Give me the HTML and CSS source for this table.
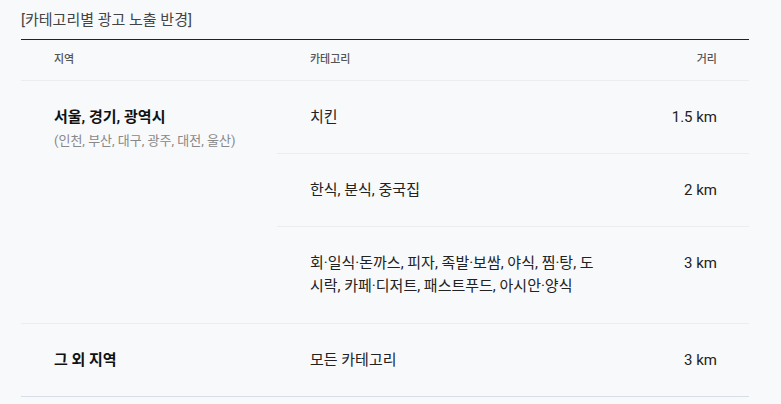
FILE: index.html
```html
<!DOCTYPE html>
<html lang="ko">
<head>
<meta charset="utf-8">
<link rel="stylesheet" href="styles.css">
</head>
<body>
<div class="wrap">
  <h2 class="title">[카테고리별 광고 노출 반경]</h2>
  <table class="radius">
    <colgroup>
      <col class="c-region">
      <col class="c-cat">
      <col class="c-dist">
    </colgroup>
    <thead>
      <tr>
        <th>지역</th>
        <th>카테고리</th>
        <th class="r">거리</th>
      </tr>
    </thead>
    <tbody>
      <tr>
        <td rowspan="3" class="region">
          <strong>서울, 경기, 광역시</strong>
          <span class="sub">(인천, 부산, 대구, 광주, 대전, 울산)</span>
        </td>
        <td>치킨</td>
        <td class="r">1.5 km</td>
      </tr>
      <tr>
        <td>한식, 분식, 중국집</td>
        <td class="r">2 km</td>
      </tr>
      <tr class="group-end">
        <td class="wrapcat">회·일식·돈까스, 피자, 족발·보쌈, 야식, 찜·탕, 도시락, 카페·디저트, 패스트푸드, 아시안·양식</td>
        <td class="r">3 km</td>
      </tr>
      <tr class="last">
        <td class="region"><strong>그 외 지역</strong></td>
        <td>모든 카테고리</td>
        <td class="r">3 km</td>
      </tr>
    </tbody>
  </table>
</div>
</body>
</html>
```

FILE: styles.css
```css
html, body {
  margin: 0;
  padding: 0;
  background: #f8f9fb;
}
body {
  font-family: Roboto, "Noto Sans CJK KR", sans-serif;
  color: #222;
}
.wrap {
  padding: 9px 32px 0 21px;
}
.title {
  margin: 0;
  font-size: 15px;
  font-weight: 400;
  line-height: 22px;
  color: #444;
  padding-bottom: 8px;
  border-bottom: 1px solid #222;
}
.radius {
  width: 728px;
  border-collapse: collapse;
  table-layout: fixed;
}
.c-region { width: 256px; }
.c-cat { width: 362px; }
.c-dist { width: 110px; }
th {
  font-size: 11px;
  font-weight: 500;
  color: #555;
  text-align: left;
  padding: 10px 32px 10px 33px;
  line-height: 20px;
  border-bottom: 1px solid #ebedf0;
}
td {
  font-size: 15px;
  line-height: 23px;
  padding: 25px 32px 24px 33px;
  vertical-align: top;
  border-bottom: 1px solid #ebedf0;
  color: #222;
}
td.wrapcat {
  word-break: break-all;
  padding-bottom: 25px;
}
th.r, td.r {
  text-align: right;
  padding-left: 0;
}
.region strong {
  display: block;
  font-weight: 700;
  color: #111;
}
.region .sub {
  display: block;
  font-size: 13px;
  line-height: 23px;
  color: #888;
}
tr.last td {
  border-bottom-color: #d9dde6;
}
```
